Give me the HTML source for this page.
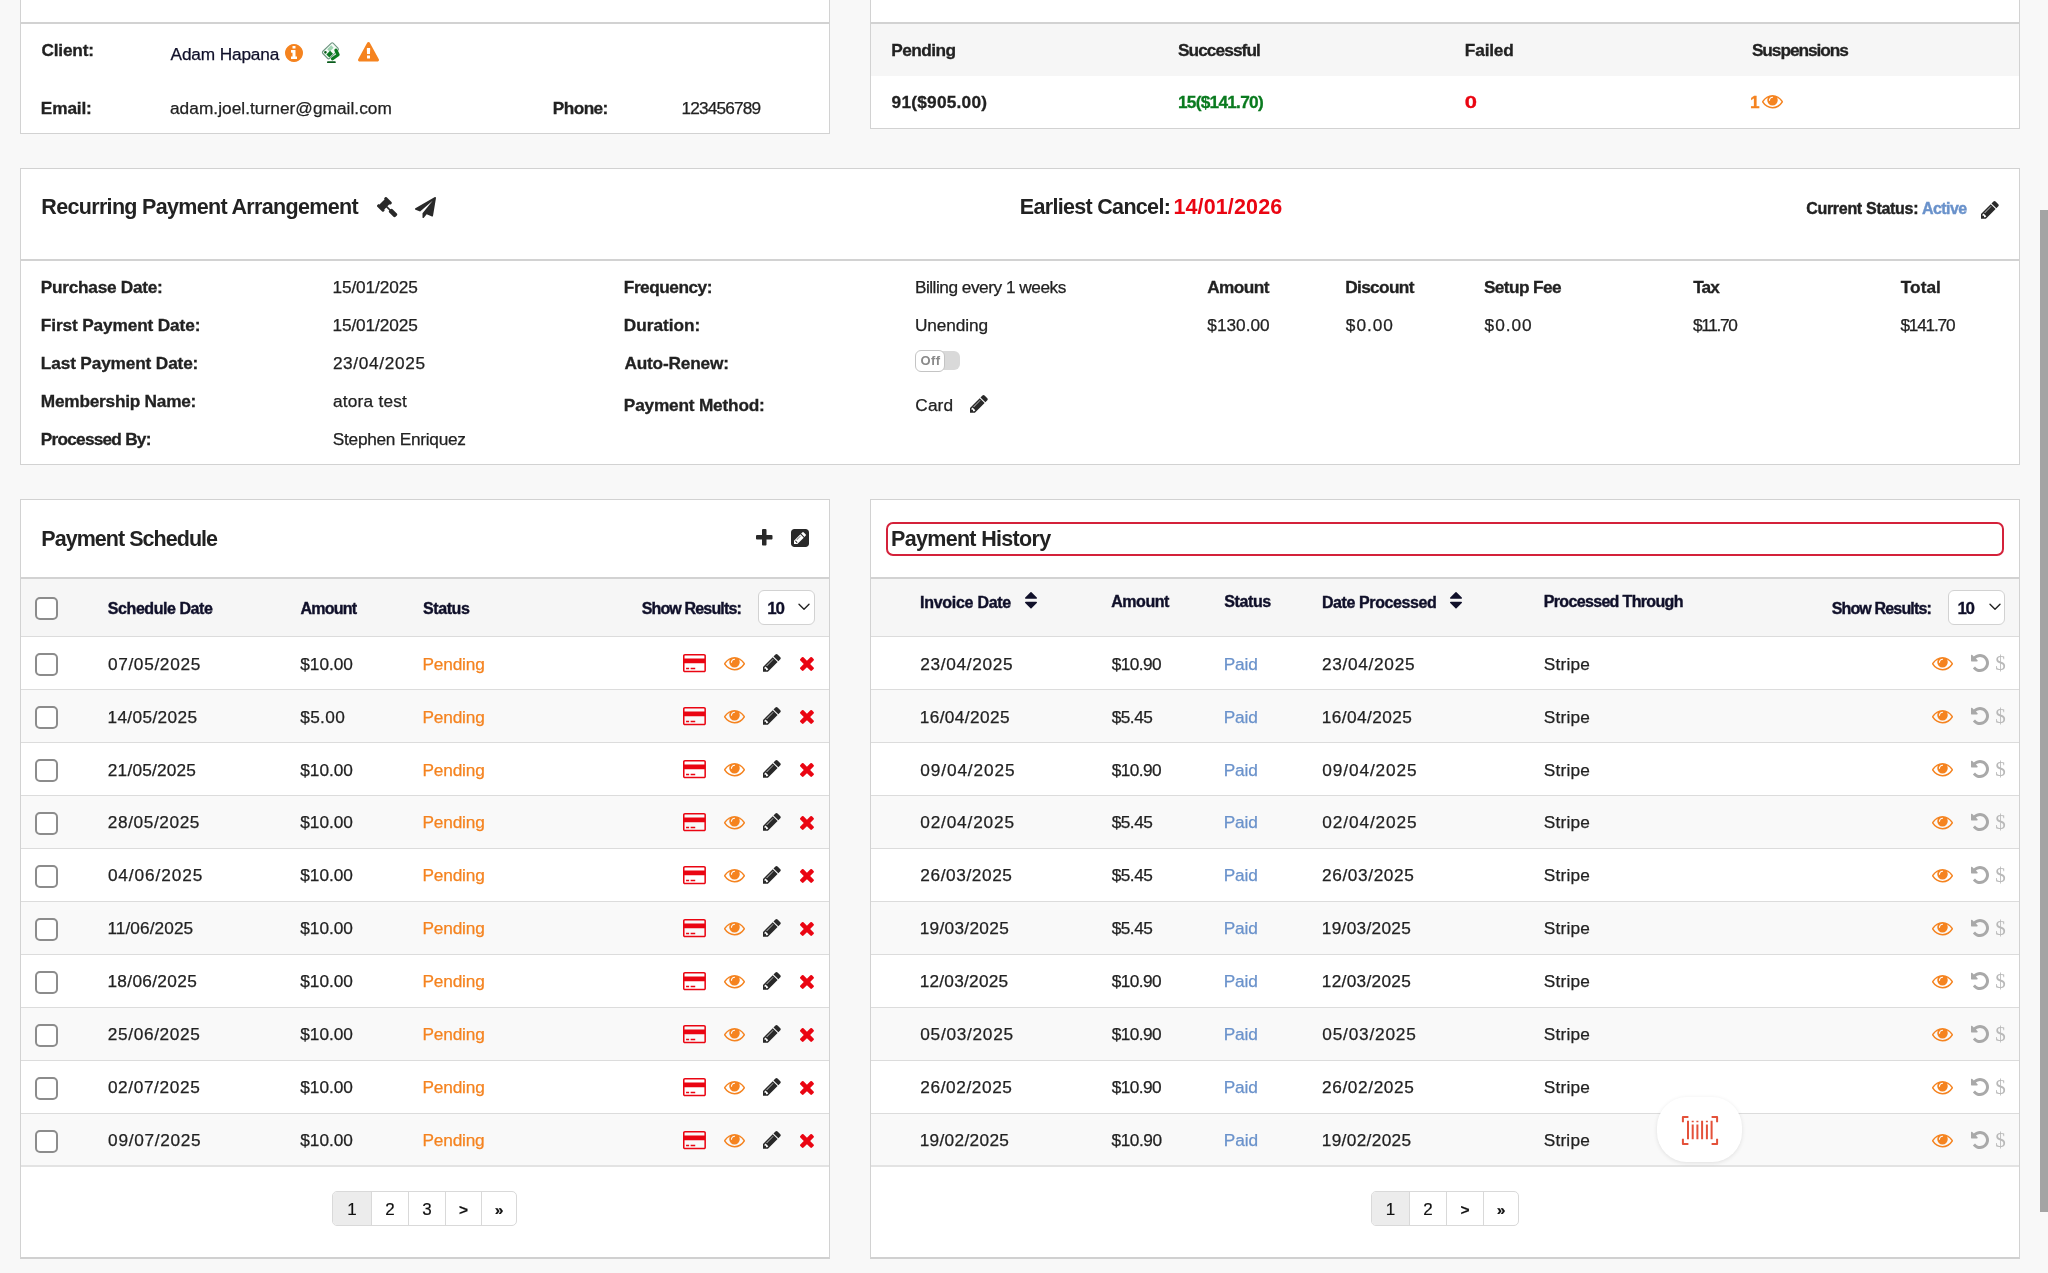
<!DOCTYPE html>
<html lang="en">
<head>
<meta charset="utf-8">
<title>Recurring Payment Arrangement</title>
<style>
*{box-sizing:border-box}
html,body{margin:0;padding:0}
html{background:#f8f8f8}
body{width:2048px;height:1273px;overflow:hidden;background:#f8f8f8;font-family:"Liberation Sans",sans-serif;color:#222;position:relative}
.card{position:absolute;background:#fff;border:1px solid #d2d2d2;will-change:transform}
.card.tbl{border-bottom:2px solid #d0d0d0}
.x{position:absolute;white-space:pre;line-height:1}
.b{font-size:17.25px;font-weight:400;-webkit-text-stroke:.25px}
.l{font-size:17.25px;font-weight:700;-webkit-text-stroke:.3px}
.t{font-size:21.5px;font-weight:700}
.h{font-size:16px;font-weight:700;color:#10102a;-webkit-text-stroke:.4px}
.s{font-size:16px;font-weight:700;-webkit-text-stroke:.4px}
.p{font-size:17px;font-weight:400;color:#111;-webkit-text-stroke:.2px}
.sel{font-size:17px;font-weight:700;color:#10102a;-webkit-text-stroke:.3px}
.off{font-size:13px;font-weight:700;color:#8a8a8a}
.ic{position:absolute;display:block;overflow:visible}
.hr{position:absolute;left:0;right:0;height:2px;background:#d2d2d2}
.thead{position:absolute;left:0;right:0;background:#f6f6f6}
.row{position:absolute;left:0;right:0;height:53px;border-bottom:1px solid #dcdcdc}
.row.alt{background:#f9f9f9}
.row.last{border-bottom:2px solid #e3e3e3}
.cb{position:absolute;width:23px;height:23px;border:2px solid #8c8c8c;border-radius:5px;background:#fff}
.select{position:absolute;height:35px;border:1px solid #d2d2d2;border-radius:6px;background:#fff}
.pager{position:absolute;height:35px;display:flex;border:1px solid #d9d9d9;border-radius:5px;background:#fff;overflow:hidden}
.pager span{display:block;height:100%;border-right:1px solid #d9d9d9;position:relative}
.pager span:last-child{border-right:0}
.pager .on{background:#ececec}
.toggle{position:absolute;width:45px;height:22px}
.toggle u{position:absolute;left:20px;top:1.5px;width:25px;height:19px;border-radius:0 6px 6px 0;background:#d9d9d9}
.toggle i{position:absolute;left:0;top:0;width:30px;height:22px;border-radius:6px;background:#fff;border:1.5px solid #c4c4c4}
.redbox{position:absolute;border:2px solid #d4213a;border-radius:7px}
.fab{position:absolute;background:#fff;border-radius:30px;box-shadow:0 1px 4px rgba(0,0,0,.10)}
.thumb{position:absolute;background:#a4a4a4}
</style>
</head>
<body>
<section class="card" style="left:20px;top:-40px;width:810px;height:174px"><div class="hr" style="top:61px"></div><span class="x l" style="left:20.39px;top:81px;letter-spacing:-0.170px;">Client:</span><span class="x b" style="left:149.58px;top:85px;letter-spacing:-0.154px;color:#10102a;">Adam Hapana</span><svg class="ic" style="left:264.00px;top:82.50px" width="18.00" height="18.00" viewBox="0 -1408 1536 1536" preserveAspectRatio="none" fill="#f5831f"><path transform="scale(1,-1)" d="M1024 160v160q0 14 -9 23t-23 9h-96v512q0 14 -9 23t-23 9h-320q-14 0 -23 -9t-9 -23v-160q0 -14 9 -23t23 -9h96v-320h-96q-14 0 -23 -9t-9 -23v-160q0 -14 9 -23t23 -9h448q14 0 23 9t9 23zM896 1056v160q0 14 -9 23t-23 9h-192q-14 0 -23 -9t-9 -23v-160q0 -14 9 -23 t23 -9h192q14 0 23 9t9 23zM1536 640q0 -209 -103 -385.5t-279.5 -279.5t-385.5 -103t-385.5 103t-279.5 279.5t-103 385.5t103 385.5t279.5 279.5t385.5 103t385.5 -103t279.5 -279.5t103 -385.5z"/></svg><svg class="ic" style="left:293px;top:77px" width="32" height="28" viewBox="0 0 32 28"><g transform="rotate(-44 16.4 12.8)"><rect x="9.1" y="7.9" width="14.6" height="9.8" rx="1.6" fill="#f4fbf6" stroke="#6d9580" stroke-width="1.1"/><rect x="15.2" y="9.4" width="5.6" height="3.4" fill="#9fd3b1"/><rect x="11" y="12.6" width="5.2" height="4.2" fill="#0d7a24"/><circle cx="11.8" cy="10.4" r="1.3" fill="#0b5f1c"/></g><path d="M21.9 12.2l2.2 4.6-5.6 4" fill="none" stroke="#0b7a20" stroke-width="3.2" stroke-linejoin="round" stroke-linecap="round"/><rect x="13" y="23.2" width="8.8" height="1.9" rx=".9" fill="#0a5c1c"/></svg><svg class="ic" style="left:337.09px;top:81.00px" width="21.02" height="19.50" viewBox="-1 -1536 1794 1664" preserveAspectRatio="none" fill="#f5831f"><path transform="scale(1,-1)" d="M1024 161v190q0 14 -9.5 23.5t-22.5 9.5h-192q-13 0 -22.5 -9.5t-9.5 -23.5v-190q0 -14 9.5 -23.5t22.5 -9.5h192q13 0 22.5 9.5t9.5 23.5zM1022 535l18 459q0 12 -10 19q-13 11 -24 11h-220q-11 0 -24 -11q-10 -7 -10 -21l17 -457q0 -10 10 -16.5t24 -6.5h185 q14 0 23.5 6.5t10.5 16.5zM1008 1469l768 -1408q35 -63 -2 -126q-17 -29 -46.5 -46t-63.5 -17h-1536q-34 0 -63.5 17t-46.5 46q-37 63 -2 126l768 1408q17 31 47 49t65 18t65 -18t47 -49z"/></svg><span class="x l" style="left:19.86px;top:139px;letter-spacing:-0.162px;">Email:</span><span class="x b" style="left:148.99px;top:139px;letter-spacing:0.044px;">adam.joel.turner@gmail.com</span><span class="x l" style="left:531.86px;top:139px;letter-spacing:-0.590px;">Phone:</span><span class="x b" style="left:660.42px;top:139px;letter-spacing:-0.838px;">123456789</span></section>
<section class="card" style="left:870px;top:-40px;width:1150px;height:169px"><div class="hr" style="top:61px"></div><div class="thead" style="top:63px;height:52px"></div><span class="x l" style="left:20.19px;top:81px;letter-spacing:-0.549px;">Pending</span><span class="x l" style="left:306.90px;top:81px;letter-spacing:-0.898px;">Successful</span><span class="x l" style="left:593.86px;top:81px;letter-spacing:-0.179px;">Failed</span><span class="x l" style="left:880.90px;top:81px;letter-spacing:-1.036px;">Suspensions</span><span class="x l" style="left:20.62px;top:133px;letter-spacing:0.239px;">91($905.00)</span><span class="x l" style="left:306.91px;top:133px;letter-spacing:-0.730px;color:#0a7a1f;">15($141.70)</span><span class="x l" style="left:593.76px;top:133px;color:#ea0512;transform:scaleX(1.273);transform-origin:0.62px 50%;">0</span><span class="x l" style="left:878.91px;top:133px;color:#f5831f;">1</span><svg class="ic" style="left:890.75px;top:133.65px" width="21.00" height="13.50" viewBox="0 -1152 1792 1152" preserveAspectRatio="none" fill="#f5831f"><path transform="scale(1,-1)" d="M1664 576q-152 236 -381 353q61 -104 61 -225q0 -185 -131.5 -316.5t-316.5 -131.5t-316.5 131.5t-131.5 316.5q0 121 61 225q-229 -117 -381 -353q133 -205 333.5 -326.5t434.5 -121.5t434.5 121.5t333.5 326.5zM944 960q0 20 -14 34t-34 14q-125 0 -214.5 -89.5 t-89.5 -214.5q0 -20 14 -34t34 -14t34 14t14 34q0 86 61 147t147 61q20 0 34 14t14 34zM1792 576q0 -34 -20 -69q-140 -230 -376.5 -368.5t-499.5 -138.5t-499.5 139t-376.5 368q-20 35 -20 69t20 69q140 229 376.5 368t499.5 139t499.5 -139t376.5 -368q20 -35 20 -69z"/></svg></section>
<section class="card" style="left:20px;top:168px;width:2000px;height:297px"><div class="hr" style="top:89.5px"></div><span class="x t" style="left:20.34px;top:28px;letter-spacing:-0.675px;">Recurring Payment Arrangement</span><svg class="ic" style="left:356.36px;top:28.11px" width="20.29" height="20.29" viewBox="40 -1496 1731 1731" preserveAspectRatio="none" fill="#292929"><path transform="scale(1,-1)" d="M1771 0q0 -53 -37 -90l-107 -108q-39 -37 -91 -37q-53 0 -90 37l-363 364q-38 36 -38 90q0 53 43 96l-256 256l-126 -126q-14 -14 -34 -14t-34 14q2 -2 12.5 -12t12.5 -13t10 -11.5t10 -13.5t6 -13.5t5.5 -16.5t1.5 -18q0 -38 -28 -68q-3 -3 -16.5 -18t-19 -20.5 t-18.5 -16.5t-22 -15.5t-22 -9t-26 -4.5q-40 0 -68 28l-408 408q-28 28 -28 68q0 13 4.5 26t9 22t15.5 22t16.5 18.5t20.5 19t18 16.5q30 28 68 28q10 0 18 -1.5t16.5 -5.5t13.5 -6t13.5 -10t11.5 -10t13 -12.5t12 -12.5q-14 14 -14 34t14 34l348 348q14 14 34 14t34 -14 q-2 2 -12.5 12t-12.5 13t-10 11.5t-10 13.5t-6 13.5t-5.5 16.5t-1.5 18q0 38 28 68q3 3 16.5 18t19 20.5t18.5 16.5t22 15.5t22 9t26 4.5q40 0 68 -28l408 -408q28 -28 28 -68q0 -13 -4.5 -26t-9 -22t-15.5 -22t-16.5 -18.5t-20.5 -19t-18 -16.5q-30 -28 -68 -28 q-10 0 -18 1.5t-16.5 5.5t-13.5 6t-13.5 10t-11.5 10t-13 12.5t-12 12.5q14 -14 14 -34t-14 -34l-126 -126l256 -256q43 43 96 43q52 0 91 -37l363 -363q37 -39 37 -91z"/></svg><svg class="ic" style="left:394.00px;top:27.80px" width="21.00" height="21.00" viewBox="-0 -1536 1792 1792" preserveAspectRatio="none" fill="#292929"><path transform="scale(1,-1)" d="M1764 1525q33 -24 27 -64l-256 -1536q-5 -29 -32 -45q-14 -8 -31 -8q-11 0 -24 5l-453 185l-242 -295q-18 -23 -49 -23q-13 0 -22 4q-19 7 -30.5 23.5t-11.5 36.5v349l864 1059l-1069 -925l-395 162q-37 14 -40 55q-2 40 32 59l1664 960q15 9 32 9q20 0 36 -11z"/></svg><span class="x t" style="left:998.77px;top:28px;letter-spacing:-0.684px;">Earliest Cancel:</span><span class="x t" style="left:1152.43px;top:28px;letter-spacing:0.129px;color:#ea0512;">14/01/2026</span><span class="x s" style="left:1785.22px;top:32px;letter-spacing:-0.301px;">Current Status:</span><span class="x s" style="left:1900.88px;top:32px;letter-spacing:-0.526px;color:#6a92cb;">Active</span><svg class="ic" style="left:1959.62px;top:32.12px" width="17.75" height="17.75" viewBox="0 -1387 1515 1515" preserveAspectRatio="none" fill="#292929"><path transform="scale(1,-1)" d="M363 0l91 91l-235 235l-91 -91v-107h128v-128h107zM886 928q0 22 -22 22q-10 0 -17 -7l-542 -542q-7 -7 -7 -17q0 -22 22 -22q10 0 17 7l542 542q7 7 7 17zM832 1120l416 -416l-832 -832h-416v416zM1515 1024q0 -53 -37 -90l-166 -166l-416 416l166 165q36 38 90 38 q53 0 91 -38l235 -234q37 -39 37 -91z"/></svg><span class="x l" style="left:19.86px;top:110px;letter-spacing:-0.281px;">Purchase Date:</span><span class="x b" style="left:311.42px;top:110px;letter-spacing:-0.108px;">15/01/2025</span><span class="x l" style="left:19.86px;top:148px;letter-spacing:-0.138px;">First Payment Date:</span><span class="x b" style="left:311.42px;top:148px;letter-spacing:-0.108px;">15/01/2025</span><span class="x l" style="left:19.86px;top:186px;letter-spacing:-0.152px;">Last Payment Date:</span><span class="x b" style="left:311.89px;top:186px;letter-spacing:0.651px;">23/04/2025</span><span class="x l" style="left:19.86px;top:224px;letter-spacing:-0.241px;">Membership Name:</span><span class="x b" style="left:311.99px;top:224px;letter-spacing:0.219px;">atora test</span><span class="x l" style="left:19.86px;top:262px;letter-spacing:-0.777px;">Processed By:</span><span class="x b" style="left:311.81px;top:262px;letter-spacing:-0.269px;">Stephen Enriquez</span><span class="x l" style="left:602.86px;top:110px;letter-spacing:-0.495px;">Frequency:</span><span class="x l" style="left:602.86px;top:148px;letter-spacing:-0.020px;">Duration:</span><span class="x l" style="left:603.39px;top:186px;letter-spacing:-0.175px;">Auto-Renew:</span><span class="x l" style="left:602.86px;top:228px;letter-spacing:-0.201px;">Payment Method:</span><span class="x b" style="left:893.89px;top:110px;letter-spacing:-0.480px;">Billing every 1 weeks</span><span class="x b" style="left:894.00px;top:148px;letter-spacing:-0.098px;">Unending</span><span class="toggle" style="left:894px;top:180.5px"><u></u><i></i><span class="x off" style="left:5.60px;top:4px;letter-spacing:0.318px;">Off</span></span><span class="x b" style="left:894.36px;top:228px;letter-spacing:0.090px;">Card</span><svg class="ic" style="left:949.37px;top:225.87px" width="17.75" height="17.75" viewBox="0 -1387 1515 1515" preserveAspectRatio="none" fill="#292929"><path transform="scale(1,-1)" d="M363 0l91 91l-235 235l-91 -91v-107h128v-128h107zM886 928q0 22 -22 22q-10 0 -17 -7l-542 -542q-7 -7 -7 -17q0 -22 22 -22q10 0 17 7l542 542q7 7 7 17zM832 1120l416 -416l-832 -832h-416v416zM1515 1024q0 -53 -37 -90l-166 -166l-416 416l166 165q36 38 90 38 q53 0 91 -38l235 -234q37 -39 37 -91z"/></svg><span class="x l" style="left:1186.15px;top:110px;letter-spacing:-0.578px;">Amount</span><span class="x b" style="left:1186.30px;top:148px;letter-spacing:0.008px;">$130.00</span><span class="x l" style="left:1324.19px;top:110px;letter-spacing:-0.638px;">Discount</span><span class="x b" style="left:1324.87px;top:148px;letter-spacing:0.975px;">$0.00</span><span class="x l" style="left:1462.90px;top:110px;letter-spacing:-0.586px;">Setup Fee</span><span class="x b" style="left:1463.62px;top:148px;letter-spacing:0.985px;">$0.00</span><span class="x l" style="left:1672.14px;top:110px;letter-spacing:-0.813px;">Tax</span><span class="x b" style="left:1672.00px;top:148px;letter-spacing:-1.350px;">$11.70</span><span class="x l" style="left:1879.71px;top:110px;letter-spacing:0.070px;">Total</span><span class="x b" style="left:1879.51px;top:148px;letter-spacing:-1.227px;">$141.70</span></section>
<section class="card tbl" style="left:20px;top:499px;width:810px;height:760px"><div class="hr" style="top:76.5px"></div><div class="thead" style="top:78.5px;height:58.5px;border-bottom:1px solid #dcdcdc"></div><span class="x t" style="left:20.34px;top:29px;letter-spacing:-0.963px;">Payment Schedule</span><svg class="ic" style="left:735.35px;top:29.35px" width="16.50" height="16.50" viewBox="0 -1408 1408 1408" preserveAspectRatio="none" fill="#292929"><path transform="scale(1,-1)" d="M1408 800v-192q0 -40 -28 -68t-68 -28h-416v-416q0 -40 -28 -68t-68 -28h-192q-40 0 -68 28t-28 68v416h-416q-40 0 -68 28t-28 68v192q0 40 28 68t68 28h416v416q0 40 28 68t68 28h192q40 0 68 -28t28 -68v-416h416q40 0 68 -28t28 -68z"/></svg><svg class="ic" style="left:769.75px;top:29.40px" width="18.00" height="18.00" viewBox="0 -1408 1536 1536" preserveAspectRatio="none" fill="#292929"><path transform="scale(1,-1)" d="M404 428l152 -152l-52 -52h-56v96h-96v56zM818 818q14 -13 -3 -30l-291 -291q-17 -17 -30 -3q-14 13 3 30l291 291q17 17 30 3zM544 128l544 544l-288 288l-544 -544v-288h288zM1152 736l92 92q28 28 28 68t-28 68l-152 152q-28 28 -68 28t-68 -28l-92 -92zM1536 1120 v-960q0 -119 -84.5 -203.5t-203.5 -84.5h-960q-119 0 -203.5 84.5t-84.5 203.5v960q0 119 84.5 203.5t203.5 84.5h960q119 0 203.5 -84.5t84.5 -203.5z"/></svg><span class="cb" style="left:14px;top:97px"></span><span class="x h" style="left:86.86px;top:101px;letter-spacing:-0.438px;">Schedule Date</span><span class="x h" style="left:279.38px;top:101px;letter-spacing:-0.740px;">Amount</span><span class="x h" style="left:402.08px;top:101px;letter-spacing:-0.425px;">Status</span><span class="x h" style="left:620.63px;top:101px;letter-spacing:-0.834px;">Show Results:</span><span class="select" style="left:737px;top:90px;width:57px"><span class="x sel" style="left:8.32px;top:9px;letter-spacing:-1.350px;">10</span><svg class="ic" style="left:39px;top:12px" width="12" height="8" viewBox="0 0 12 8" fill="none" stroke="#222" stroke-width="1.4" stroke-linecap="round" stroke-linejoin="round"><path d="M1 1.2l5 5 5-5"/></svg></span><div class="row" style="top:137px"><span class="cb" style="left:14px;top:16px"></span><span class="x b" style="left:86.88px;top:19px;letter-spacing:0.671px;">07/05/2025</span><span class="x b" style="left:279.28px;top:19px;letter-spacing:-0.012px;">$10.00</span><span class="x b" style="left:401.54px;top:19px;letter-spacing:-0.185px;color:#f5831f;">Pending</span><svg class="ic" style="left:662.34px;top:16.73px" width="22.93" height="18.34" viewBox="0 -1408 1920 1536" preserveAspectRatio="none" fill="#ea0512"><path transform="scale(1,-1)" d="M1760 1408q66 0 113 -47t47 -113v-1216q0 -66 -47 -113t-113 -47h-1600q-66 0 -113 47t-47 113v1216q0 66 47 113t113 47h1600zM160 1280q-13 0 -22.5 -9.5t-9.5 -22.5v-224h1664v224q0 13 -9.5 22.5t-22.5 9.5h-1600zM1760 0q13 0 22.5 9.5t9.5 22.5v608h-1664v-608 q0 -13 9.5 -22.5t22.5 -9.5h1600zM256 128v128h256v-128h-256zM640 128v128h384v-128h-384z"/></svg><svg class="ic" style="left:703.00px;top:19.65px" width="21.00" height="13.50" viewBox="0 -1152 1792 1152" preserveAspectRatio="none" fill="#f5831f"><path transform="scale(1,-1)" d="M1664 576q-152 236 -381 353q61 -104 61 -225q0 -185 -131.5 -316.5t-316.5 -131.5t-316.5 131.5t-131.5 316.5q0 121 61 225q-229 -117 -381 -353q133 -205 333.5 -326.5t434.5 -121.5t434.5 121.5t333.5 326.5zM944 960q0 20 -14 34t-34 14q-125 0 -214.5 -89.5 t-89.5 -214.5q0 -20 14 -34t34 -14t34 14t14 34q0 86 61 147t147 61q20 0 34 14t14 34zM1792 576q0 -34 -20 -69q-140 -230 -376.5 -368.5t-499.5 -138.5t-499.5 139t-376.5 368q-20 35 -20 69t20 69q140 229 376.5 368t499.5 139t499.5 -139t376.5 -368q20 -35 20 -69z"/></svg><svg class="ic" style="left:742.02px;top:17.22px" width="17.75" height="17.75" viewBox="0 -1387 1515 1515" preserveAspectRatio="none" fill="#292929"><path transform="scale(1,-1)" d="M363 0l91 91l-235 235l-91 -91v-107h128v-128h107zM886 928q0 22 -22 22q-10 0 -17 -7l-542 -542q-7 -7 -7 -17q0 -22 22 -22q10 0 17 7l542 542q7 7 7 17zM832 1120l416 -416l-832 -832h-416v416zM1515 1024q0 -53 -37 -90l-166 -166l-416 416l166 165q36 38 90 38 q53 0 91 -38l235 -234q37 -39 37 -91z"/></svg><svg class="ic" style="left:779.04px;top:20.04px" width="13.92" height="13.92" viewBox="110 -1170 1188 1188" preserveAspectRatio="none" fill="#ea0512"><path transform="scale(1,-1)" d="M1298 214q0 -40 -28 -68l-136 -136q-28 -28 -68 -28t-68 28l-294 294l-294 -294q-28 -28 -68 -28t-68 28l-136 136q-28 28 -28 68t28 68l294 294l-294 294q-28 28 -28 68t28 68l136 136q28 28 68 28t68 -28l294 -294l294 294q28 28 68 28t68 -28l136 -136q28 -28 28 -68 t-28 -68l-294 -294l294 -294q28 -28 28 -68z"/></svg></div><div class="row alt" style="top:190px"><span class="cb" style="left:14px;top:16px"></span><span class="x b" style="left:86.45px;top:19px;letter-spacing:0.357px;">14/05/2025</span><span class="x b" style="left:279.28px;top:19px;letter-spacing:0.323px;">$5.00</span><span class="x b" style="left:401.54px;top:19px;letter-spacing:-0.185px;color:#f5831f;">Pending</span><svg class="ic" style="left:662.34px;top:16.73px" width="22.93" height="18.34" viewBox="0 -1408 1920 1536" preserveAspectRatio="none" fill="#ea0512"><path transform="scale(1,-1)" d="M1760 1408q66 0 113 -47t47 -113v-1216q0 -66 -47 -113t-113 -47h-1600q-66 0 -113 47t-47 113v1216q0 66 47 113t113 47h1600zM160 1280q-13 0 -22.5 -9.5t-9.5 -22.5v-224h1664v224q0 13 -9.5 22.5t-22.5 9.5h-1600zM1760 0q13 0 22.5 9.5t9.5 22.5v608h-1664v-608 q0 -13 9.5 -22.5t22.5 -9.5h1600zM256 128v128h256v-128h-256zM640 128v128h384v-128h-384z"/></svg><svg class="ic" style="left:703.00px;top:19.65px" width="21.00" height="13.50" viewBox="0 -1152 1792 1152" preserveAspectRatio="none" fill="#f5831f"><path transform="scale(1,-1)" d="M1664 576q-152 236 -381 353q61 -104 61 -225q0 -185 -131.5 -316.5t-316.5 -131.5t-316.5 131.5t-131.5 316.5q0 121 61 225q-229 -117 -381 -353q133 -205 333.5 -326.5t434.5 -121.5t434.5 121.5t333.5 326.5zM944 960q0 20 -14 34t-34 14q-125 0 -214.5 -89.5 t-89.5 -214.5q0 -20 14 -34t34 -14t34 14t14 34q0 86 61 147t147 61q20 0 34 14t14 34zM1792 576q0 -34 -20 -69q-140 -230 -376.5 -368.5t-499.5 -138.5t-499.5 139t-376.5 368q-20 35 -20 69t20 69q140 229 376.5 368t499.5 139t499.5 -139t376.5 -368q20 -35 20 -69z"/></svg><svg class="ic" style="left:742.02px;top:17.22px" width="17.75" height="17.75" viewBox="0 -1387 1515 1515" preserveAspectRatio="none" fill="#292929"><path transform="scale(1,-1)" d="M363 0l91 91l-235 235l-91 -91v-107h128v-128h107zM886 928q0 22 -22 22q-10 0 -17 -7l-542 -542q-7 -7 -7 -17q0 -22 22 -22q10 0 17 7l542 542q7 7 7 17zM832 1120l416 -416l-832 -832h-416v416zM1515 1024q0 -53 -37 -90l-166 -166l-416 416l166 165q36 38 90 38 q53 0 91 -38l235 -234q37 -39 37 -91z"/></svg><svg class="ic" style="left:779.04px;top:20.04px" width="13.92" height="13.92" viewBox="110 -1170 1188 1188" preserveAspectRatio="none" fill="#ea0512"><path transform="scale(1,-1)" d="M1298 214q0 -40 -28 -68l-136 -136q-28 -28 -68 -28t-68 28l-294 294l-294 -294q-28 -28 -68 -28t-68 28l-136 136q-28 28 -28 68t28 68l294 294l-294 294q-28 28 -28 68t28 68l136 136q28 28 68 28t68 -28l294 -294l294 294q28 28 68 28t68 -28l136 -136q28 -28 28 -68 t-28 -68l-294 -294l294 -294q28 -28 28 -68z"/></svg></div><div class="row" style="top:243px"><span class="cb" style="left:14px;top:16px"></span><span class="x b" style="left:86.82px;top:19px;letter-spacing:0.200px;">21/05/2025</span><span class="x b" style="left:279.28px;top:19px;letter-spacing:-0.012px;">$10.00</span><span class="x b" style="left:401.54px;top:19px;letter-spacing:-0.185px;color:#f5831f;">Pending</span><svg class="ic" style="left:662.34px;top:16.73px" width="22.93" height="18.34" viewBox="0 -1408 1920 1536" preserveAspectRatio="none" fill="#ea0512"><path transform="scale(1,-1)" d="M1760 1408q66 0 113 -47t47 -113v-1216q0 -66 -47 -113t-113 -47h-1600q-66 0 -113 47t-47 113v1216q0 66 47 113t113 47h1600zM160 1280q-13 0 -22.5 -9.5t-9.5 -22.5v-224h1664v224q0 13 -9.5 22.5t-22.5 9.5h-1600zM1760 0q13 0 22.5 9.5t9.5 22.5v608h-1664v-608 q0 -13 9.5 -22.5t22.5 -9.5h1600zM256 128v128h256v-128h-256zM640 128v128h384v-128h-384z"/></svg><svg class="ic" style="left:703.00px;top:19.65px" width="21.00" height="13.50" viewBox="0 -1152 1792 1152" preserveAspectRatio="none" fill="#f5831f"><path transform="scale(1,-1)" d="M1664 576q-152 236 -381 353q61 -104 61 -225q0 -185 -131.5 -316.5t-316.5 -131.5t-316.5 131.5t-131.5 316.5q0 121 61 225q-229 -117 -381 -353q133 -205 333.5 -326.5t434.5 -121.5t434.5 121.5t333.5 326.5zM944 960q0 20 -14 34t-34 14q-125 0 -214.5 -89.5 t-89.5 -214.5q0 -20 14 -34t34 -14t34 14t14 34q0 86 61 147t147 61q20 0 34 14t14 34zM1792 576q0 -34 -20 -69q-140 -230 -376.5 -368.5t-499.5 -138.5t-499.5 139t-376.5 368q-20 35 -20 69t20 69q140 229 376.5 368t499.5 139t499.5 -139t376.5 -368q20 -35 20 -69z"/></svg><svg class="ic" style="left:742.02px;top:17.22px" width="17.75" height="17.75" viewBox="0 -1387 1515 1515" preserveAspectRatio="none" fill="#292929"><path transform="scale(1,-1)" d="M363 0l91 91l-235 235l-91 -91v-107h128v-128h107zM886 928q0 22 -22 22q-10 0 -17 -7l-542 -542q-7 -7 -7 -17q0 -22 22 -22q10 0 17 7l542 542q7 7 7 17zM832 1120l416 -416l-832 -832h-416v416zM1515 1024q0 -53 -37 -90l-166 -166l-416 416l166 165q36 38 90 38 q53 0 91 -38l235 -234q37 -39 37 -91z"/></svg><svg class="ic" style="left:779.04px;top:20.04px" width="13.92" height="13.92" viewBox="110 -1170 1188 1188" preserveAspectRatio="none" fill="#ea0512"><path transform="scale(1,-1)" d="M1298 214q0 -40 -28 -68l-136 -136q-28 -28 -68 -28t-68 28l-294 294l-294 -294q-28 -28 -68 -28t-68 28l-136 136q-28 28 -28 68t28 68l294 294l-294 294q-28 28 -28 68t28 68l136 136q28 28 68 28t68 -28l294 -294l294 294q28 28 68 28t68 -28l136 -136q28 -28 28 -68 t-28 -68l-294 -294l294 -294q28 -28 28 -68z"/></svg></div><div class="row alt" style="top:296px"><span class="cb" style="left:14px;top:16px"></span><span class="x b" style="left:86.82px;top:18px;letter-spacing:0.590px;">28/05/2025</span><span class="x b" style="left:279.28px;top:18px;letter-spacing:-0.012px;">$10.00</span><span class="x b" style="left:401.54px;top:18px;letter-spacing:-0.185px;color:#f5831f;">Pending</span><svg class="ic" style="left:662.34px;top:16.73px" width="22.93" height="18.34" viewBox="0 -1408 1920 1536" preserveAspectRatio="none" fill="#ea0512"><path transform="scale(1,-1)" d="M1760 1408q66 0 113 -47t47 -113v-1216q0 -66 -47 -113t-113 -47h-1600q-66 0 -113 47t-47 113v1216q0 66 47 113t113 47h1600zM160 1280q-13 0 -22.5 -9.5t-9.5 -22.5v-224h1664v224q0 13 -9.5 22.5t-22.5 9.5h-1600zM1760 0q13 0 22.5 9.5t9.5 22.5v608h-1664v-608 q0 -13 9.5 -22.5t22.5 -9.5h1600zM256 128v128h256v-128h-256zM640 128v128h384v-128h-384z"/></svg><svg class="ic" style="left:703.00px;top:19.65px" width="21.00" height="13.50" viewBox="0 -1152 1792 1152" preserveAspectRatio="none" fill="#f5831f"><path transform="scale(1,-1)" d="M1664 576q-152 236 -381 353q61 -104 61 -225q0 -185 -131.5 -316.5t-316.5 -131.5t-316.5 131.5t-131.5 316.5q0 121 61 225q-229 -117 -381 -353q133 -205 333.5 -326.5t434.5 -121.5t434.5 121.5t333.5 326.5zM944 960q0 20 -14 34t-34 14q-125 0 -214.5 -89.5 t-89.5 -214.5q0 -20 14 -34t34 -14t34 14t14 34q0 86 61 147t147 61q20 0 34 14t14 34zM1792 576q0 -34 -20 -69q-140 -230 -376.5 -368.5t-499.5 -138.5t-499.5 139t-376.5 368q-20 35 -20 69t20 69q140 229 376.5 368t499.5 139t499.5 -139t376.5 -368q20 -35 20 -69z"/></svg><svg class="ic" style="left:742.02px;top:17.22px" width="17.75" height="17.75" viewBox="0 -1387 1515 1515" preserveAspectRatio="none" fill="#292929"><path transform="scale(1,-1)" d="M363 0l91 91l-235 235l-91 -91v-107h128v-128h107zM886 928q0 22 -22 22q-10 0 -17 -7l-542 -542q-7 -7 -7 -17q0 -22 22 -22q10 0 17 7l542 542q7 7 7 17zM832 1120l416 -416l-832 -832h-416v416zM1515 1024q0 -53 -37 -90l-166 -166l-416 416l166 165q36 38 90 38 q53 0 91 -38l235 -234q37 -39 37 -91z"/></svg><svg class="ic" style="left:779.04px;top:20.04px" width="13.92" height="13.92" viewBox="110 -1170 1188 1188" preserveAspectRatio="none" fill="#ea0512"><path transform="scale(1,-1)" d="M1298 214q0 -40 -28 -68l-136 -136q-28 -28 -68 -28t-68 28l-294 294l-294 -294q-28 -28 -68 -28t-68 28l-136 136q-28 28 -28 68t28 68l294 294l-294 294q-28 28 -28 68t28 68l136 136q28 28 68 28t68 -28l294 -294l294 294q28 28 68 28t68 -28l136 -136q28 -28 28 -68 t-28 -68l-294 -294l294 -294q28 -28 28 -68z"/></svg></div><div class="row" style="top:349px"><span class="cb" style="left:14px;top:16px"></span><span class="x b" style="left:86.88px;top:18px;letter-spacing:0.895px;">04/06/2025</span><span class="x b" style="left:279.28px;top:18px;letter-spacing:-0.012px;">$10.00</span><span class="x b" style="left:401.54px;top:18px;letter-spacing:-0.185px;color:#f5831f;">Pending</span><svg class="ic" style="left:662.34px;top:16.73px" width="22.93" height="18.34" viewBox="0 -1408 1920 1536" preserveAspectRatio="none" fill="#ea0512"><path transform="scale(1,-1)" d="M1760 1408q66 0 113 -47t47 -113v-1216q0 -66 -47 -113t-113 -47h-1600q-66 0 -113 47t-47 113v1216q0 66 47 113t113 47h1600zM160 1280q-13 0 -22.5 -9.5t-9.5 -22.5v-224h1664v224q0 13 -9.5 22.5t-22.5 9.5h-1600zM1760 0q13 0 22.5 9.5t9.5 22.5v608h-1664v-608 q0 -13 9.5 -22.5t22.5 -9.5h1600zM256 128v128h256v-128h-256zM640 128v128h384v-128h-384z"/></svg><svg class="ic" style="left:703.00px;top:19.65px" width="21.00" height="13.50" viewBox="0 -1152 1792 1152" preserveAspectRatio="none" fill="#f5831f"><path transform="scale(1,-1)" d="M1664 576q-152 236 -381 353q61 -104 61 -225q0 -185 -131.5 -316.5t-316.5 -131.5t-316.5 131.5t-131.5 316.5q0 121 61 225q-229 -117 -381 -353q133 -205 333.5 -326.5t434.5 -121.5t434.5 121.5t333.5 326.5zM944 960q0 20 -14 34t-34 14q-125 0 -214.5 -89.5 t-89.5 -214.5q0 -20 14 -34t34 -14t34 14t14 34q0 86 61 147t147 61q20 0 34 14t14 34zM1792 576q0 -34 -20 -69q-140 -230 -376.5 -368.5t-499.5 -138.5t-499.5 139t-376.5 368q-20 35 -20 69t20 69q140 229 376.5 368t499.5 139t499.5 -139t376.5 -368q20 -35 20 -69z"/></svg><svg class="ic" style="left:742.02px;top:17.22px" width="17.75" height="17.75" viewBox="0 -1387 1515 1515" preserveAspectRatio="none" fill="#292929"><path transform="scale(1,-1)" d="M363 0l91 91l-235 235l-91 -91v-107h128v-128h107zM886 928q0 22 -22 22q-10 0 -17 -7l-542 -542q-7 -7 -7 -17q0 -22 22 -22q10 0 17 7l542 542q7 7 7 17zM832 1120l416 -416l-832 -832h-416v416zM1515 1024q0 -53 -37 -90l-166 -166l-416 416l166 165q36 38 90 38 q53 0 91 -38l235 -234q37 -39 37 -91z"/></svg><svg class="ic" style="left:779.04px;top:20.04px" width="13.92" height="13.92" viewBox="110 -1170 1188 1188" preserveAspectRatio="none" fill="#ea0512"><path transform="scale(1,-1)" d="M1298 214q0 -40 -28 -68l-136 -136q-28 -28 -68 -28t-68 28l-294 294l-294 -294q-28 -28 -68 -28t-68 28l-136 136q-28 28 -28 68t28 68l294 294l-294 294q-28 28 -28 68t28 68l136 136q28 28 68 28t68 -28l294 -294l294 294q28 28 68 28t68 -28l136 -136q28 -28 28 -68 t-28 -68l-294 -294l294 -294q28 -28 28 -68z"/></svg></div><div class="row alt" style="top:402px"><span class="cb" style="left:14px;top:16px"></span><span class="x b" style="left:86.45px;top:18px;letter-spacing:0.076px;">11/06/2025</span><span class="x b" style="left:279.28px;top:18px;letter-spacing:-0.012px;">$10.00</span><span class="x b" style="left:401.54px;top:18px;letter-spacing:-0.185px;color:#f5831f;">Pending</span><svg class="ic" style="left:662.34px;top:16.73px" width="22.93" height="18.34" viewBox="0 -1408 1920 1536" preserveAspectRatio="none" fill="#ea0512"><path transform="scale(1,-1)" d="M1760 1408q66 0 113 -47t47 -113v-1216q0 -66 -47 -113t-113 -47h-1600q-66 0 -113 47t-47 113v1216q0 66 47 113t113 47h1600zM160 1280q-13 0 -22.5 -9.5t-9.5 -22.5v-224h1664v224q0 13 -9.5 22.5t-22.5 9.5h-1600zM1760 0q13 0 22.5 9.5t9.5 22.5v608h-1664v-608 q0 -13 9.5 -22.5t22.5 -9.5h1600zM256 128v128h256v-128h-256zM640 128v128h384v-128h-384z"/></svg><svg class="ic" style="left:703.00px;top:19.65px" width="21.00" height="13.50" viewBox="0 -1152 1792 1152" preserveAspectRatio="none" fill="#f5831f"><path transform="scale(1,-1)" d="M1664 576q-152 236 -381 353q61 -104 61 -225q0 -185 -131.5 -316.5t-316.5 -131.5t-316.5 131.5t-131.5 316.5q0 121 61 225q-229 -117 -381 -353q133 -205 333.5 -326.5t434.5 -121.5t434.5 121.5t333.5 326.5zM944 960q0 20 -14 34t-34 14q-125 0 -214.5 -89.5 t-89.5 -214.5q0 -20 14 -34t34 -14t34 14t14 34q0 86 61 147t147 61q20 0 34 14t14 34zM1792 576q0 -34 -20 -69q-140 -230 -376.5 -368.5t-499.5 -138.5t-499.5 139t-376.5 368q-20 35 -20 69t20 69q140 229 376.5 368t499.5 139t499.5 -139t376.5 -368q20 -35 20 -69z"/></svg><svg class="ic" style="left:742.02px;top:17.22px" width="17.75" height="17.75" viewBox="0 -1387 1515 1515" preserveAspectRatio="none" fill="#292929"><path transform="scale(1,-1)" d="M363 0l91 91l-235 235l-91 -91v-107h128v-128h107zM886 928q0 22 -22 22q-10 0 -17 -7l-542 -542q-7 -7 -7 -17q0 -22 22 -22q10 0 17 7l542 542q7 7 7 17zM832 1120l416 -416l-832 -832h-416v416zM1515 1024q0 -53 -37 -90l-166 -166l-416 416l166 165q36 38 90 38 q53 0 91 -38l235 -234q37 -39 37 -91z"/></svg><svg class="ic" style="left:779.04px;top:20.04px" width="13.92" height="13.92" viewBox="110 -1170 1188 1188" preserveAspectRatio="none" fill="#ea0512"><path transform="scale(1,-1)" d="M1298 214q0 -40 -28 -68l-136 -136q-28 -28 -68 -28t-68 28l-294 294l-294 -294q-28 -28 -68 -28t-68 28l-136 136q-28 28 -28 68t28 68l294 294l-294 294q-28 28 -28 68t28 68l136 136q28 28 68 28t68 -28l294 -294l294 294q28 28 68 28t68 -28l136 -136q28 -28 28 -68 t-28 -68l-294 -294l294 -294q28 -28 28 -68z"/></svg></div><div class="row" style="top:455px"><span class="cb" style="left:14px;top:16px"></span><span class="x b" style="left:86.45px;top:18px;letter-spacing:0.329px;">18/06/2025</span><span class="x b" style="left:279.28px;top:18px;letter-spacing:-0.012px;">$10.00</span><span class="x b" style="left:401.54px;top:18px;letter-spacing:-0.185px;color:#f5831f;">Pending</span><svg class="ic" style="left:662.34px;top:16.73px" width="22.93" height="18.34" viewBox="0 -1408 1920 1536" preserveAspectRatio="none" fill="#ea0512"><path transform="scale(1,-1)" d="M1760 1408q66 0 113 -47t47 -113v-1216q0 -66 -47 -113t-113 -47h-1600q-66 0 -113 47t-47 113v1216q0 66 47 113t113 47h1600zM160 1280q-13 0 -22.5 -9.5t-9.5 -22.5v-224h1664v224q0 13 -9.5 22.5t-22.5 9.5h-1600zM1760 0q13 0 22.5 9.5t9.5 22.5v608h-1664v-608 q0 -13 9.5 -22.5t22.5 -9.5h1600zM256 128v128h256v-128h-256zM640 128v128h384v-128h-384z"/></svg><svg class="ic" style="left:703.00px;top:19.65px" width="21.00" height="13.50" viewBox="0 -1152 1792 1152" preserveAspectRatio="none" fill="#f5831f"><path transform="scale(1,-1)" d="M1664 576q-152 236 -381 353q61 -104 61 -225q0 -185 -131.5 -316.5t-316.5 -131.5t-316.5 131.5t-131.5 316.5q0 121 61 225q-229 -117 -381 -353q133 -205 333.5 -326.5t434.5 -121.5t434.5 121.5t333.5 326.5zM944 960q0 20 -14 34t-34 14q-125 0 -214.5 -89.5 t-89.5 -214.5q0 -20 14 -34t34 -14t34 14t14 34q0 86 61 147t147 61q20 0 34 14t14 34zM1792 576q0 -34 -20 -69q-140 -230 -376.5 -368.5t-499.5 -138.5t-499.5 139t-376.5 368q-20 35 -20 69t20 69q140 229 376.5 368t499.5 139t499.5 -139t376.5 -368q20 -35 20 -69z"/></svg><svg class="ic" style="left:742.02px;top:17.22px" width="17.75" height="17.75" viewBox="0 -1387 1515 1515" preserveAspectRatio="none" fill="#292929"><path transform="scale(1,-1)" d="M363 0l91 91l-235 235l-91 -91v-107h128v-128h107zM886 928q0 22 -22 22q-10 0 -17 -7l-542 -542q-7 -7 -7 -17q0 -22 22 -22q10 0 17 7l542 542q7 7 7 17zM832 1120l416 -416l-832 -832h-416v416zM1515 1024q0 -53 -37 -90l-166 -166l-416 416l166 165q36 38 90 38 q53 0 91 -38l235 -234q37 -39 37 -91z"/></svg><svg class="ic" style="left:779.04px;top:20.04px" width="13.92" height="13.92" viewBox="110 -1170 1188 1188" preserveAspectRatio="none" fill="#ea0512"><path transform="scale(1,-1)" d="M1298 214q0 -40 -28 -68l-136 -136q-28 -28 -68 -28t-68 28l-294 294l-294 -294q-28 -28 -68 -28t-68 28l-136 136q-28 28 -28 68t28 68l294 294l-294 294q-28 28 -28 68t28 68l136 136q28 28 68 28t68 -28l294 -294l294 294q28 28 68 28t68 -28l136 -136q28 -28 28 -68 t-28 -68l-294 -294l294 -294q28 -28 28 -68z"/></svg></div><div class="row alt" style="top:508px"><span class="cb" style="left:14px;top:16px"></span><span class="x b" style="left:86.82px;top:18px;letter-spacing:0.630px;">25/06/2025</span><span class="x b" style="left:279.28px;top:18px;letter-spacing:-0.012px;">$10.00</span><span class="x b" style="left:401.54px;top:18px;letter-spacing:-0.185px;color:#f5831f;">Pending</span><svg class="ic" style="left:662.34px;top:16.73px" width="22.93" height="18.34" viewBox="0 -1408 1920 1536" preserveAspectRatio="none" fill="#ea0512"><path transform="scale(1,-1)" d="M1760 1408q66 0 113 -47t47 -113v-1216q0 -66 -47 -113t-113 -47h-1600q-66 0 -113 47t-47 113v1216q0 66 47 113t113 47h1600zM160 1280q-13 0 -22.5 -9.5t-9.5 -22.5v-224h1664v224q0 13 -9.5 22.5t-22.5 9.5h-1600zM1760 0q13 0 22.5 9.5t9.5 22.5v608h-1664v-608 q0 -13 9.5 -22.5t22.5 -9.5h1600zM256 128v128h256v-128h-256zM640 128v128h384v-128h-384z"/></svg><svg class="ic" style="left:703.00px;top:19.65px" width="21.00" height="13.50" viewBox="0 -1152 1792 1152" preserveAspectRatio="none" fill="#f5831f"><path transform="scale(1,-1)" d="M1664 576q-152 236 -381 353q61 -104 61 -225q0 -185 -131.5 -316.5t-316.5 -131.5t-316.5 131.5t-131.5 316.5q0 121 61 225q-229 -117 -381 -353q133 -205 333.5 -326.5t434.5 -121.5t434.5 121.5t333.5 326.5zM944 960q0 20 -14 34t-34 14q-125 0 -214.5 -89.5 t-89.5 -214.5q0 -20 14 -34t34 -14t34 14t14 34q0 86 61 147t147 61q20 0 34 14t14 34zM1792 576q0 -34 -20 -69q-140 -230 -376.5 -368.5t-499.5 -138.5t-499.5 139t-376.5 368q-20 35 -20 69t20 69q140 229 376.5 368t499.5 139t499.5 -139t376.5 -368q20 -35 20 -69z"/></svg><svg class="ic" style="left:742.02px;top:17.22px" width="17.75" height="17.75" viewBox="0 -1387 1515 1515" preserveAspectRatio="none" fill="#292929"><path transform="scale(1,-1)" d="M363 0l91 91l-235 235l-91 -91v-107h128v-128h107zM886 928q0 22 -22 22q-10 0 -17 -7l-542 -542q-7 -7 -7 -17q0 -22 22 -22q10 0 17 7l542 542q7 7 7 17zM832 1120l416 -416l-832 -832h-416v416zM1515 1024q0 -53 -37 -90l-166 -166l-416 416l166 165q36 38 90 38 q53 0 91 -38l235 -234q37 -39 37 -91z"/></svg><svg class="ic" style="left:779.04px;top:20.04px" width="13.92" height="13.92" viewBox="110 -1170 1188 1188" preserveAspectRatio="none" fill="#ea0512"><path transform="scale(1,-1)" d="M1298 214q0 -40 -28 -68l-136 -136q-28 -28 -68 -28t-68 28l-294 294l-294 -294q-28 -28 -68 -28t-68 28l-136 136q-28 28 -28 68t28 68l294 294l-294 294q-28 28 -28 68t28 68l136 136q28 28 68 28t68 -28l294 -294l294 294q28 28 68 28t68 -28l136 -136q28 -28 28 -68 t-28 -68l-294 -294l294 -294q28 -28 28 -68z"/></svg></div><div class="row" style="top:561px"><span class="cb" style="left:14px;top:16px"></span><span class="x b" style="left:86.88px;top:18px;letter-spacing:0.616px;">02/07/2025</span><span class="x b" style="left:279.28px;top:18px;letter-spacing:-0.012px;">$10.00</span><span class="x b" style="left:401.54px;top:18px;letter-spacing:-0.185px;color:#f5831f;">Pending</span><svg class="ic" style="left:662.34px;top:16.73px" width="22.93" height="18.34" viewBox="0 -1408 1920 1536" preserveAspectRatio="none" fill="#ea0512"><path transform="scale(1,-1)" d="M1760 1408q66 0 113 -47t47 -113v-1216q0 -66 -47 -113t-113 -47h-1600q-66 0 -113 47t-47 113v1216q0 66 47 113t113 47h1600zM160 1280q-13 0 -22.5 -9.5t-9.5 -22.5v-224h1664v224q0 13 -9.5 22.5t-22.5 9.5h-1600zM1760 0q13 0 22.5 9.5t9.5 22.5v608h-1664v-608 q0 -13 9.5 -22.5t22.5 -9.5h1600zM256 128v128h256v-128h-256zM640 128v128h384v-128h-384z"/></svg><svg class="ic" style="left:703.00px;top:19.65px" width="21.00" height="13.50" viewBox="0 -1152 1792 1152" preserveAspectRatio="none" fill="#f5831f"><path transform="scale(1,-1)" d="M1664 576q-152 236 -381 353q61 -104 61 -225q0 -185 -131.5 -316.5t-316.5 -131.5t-316.5 131.5t-131.5 316.5q0 121 61 225q-229 -117 -381 -353q133 -205 333.5 -326.5t434.5 -121.5t434.5 121.5t333.5 326.5zM944 960q0 20 -14 34t-34 14q-125 0 -214.5 -89.5 t-89.5 -214.5q0 -20 14 -34t34 -14t34 14t14 34q0 86 61 147t147 61q20 0 34 14t14 34zM1792 576q0 -34 -20 -69q-140 -230 -376.5 -368.5t-499.5 -138.5t-499.5 139t-376.5 368q-20 35 -20 69t20 69q140 229 376.5 368t499.5 139t499.5 -139t376.5 -368q20 -35 20 -69z"/></svg><svg class="ic" style="left:742.02px;top:17.22px" width="17.75" height="17.75" viewBox="0 -1387 1515 1515" preserveAspectRatio="none" fill="#292929"><path transform="scale(1,-1)" d="M363 0l91 91l-235 235l-91 -91v-107h128v-128h107zM886 928q0 22 -22 22q-10 0 -17 -7l-542 -542q-7 -7 -7 -17q0 -22 22 -22q10 0 17 7l542 542q7 7 7 17zM832 1120l416 -416l-832 -832h-416v416zM1515 1024q0 -53 -37 -90l-166 -166l-416 416l166 165q36 38 90 38 q53 0 91 -38l235 -234q37 -39 37 -91z"/></svg><svg class="ic" style="left:779.04px;top:20.04px" width="13.92" height="13.92" viewBox="110 -1170 1188 1188" preserveAspectRatio="none" fill="#ea0512"><path transform="scale(1,-1)" d="M1298 214q0 -40 -28 -68l-136 -136q-28 -28 -68 -28t-68 28l-294 294l-294 -294q-28 -28 -68 -28t-68 28l-136 136q-28 28 -28 68t28 68l294 294l-294 294q-28 28 -28 68t28 68l136 136q28 28 68 28t68 -28l294 -294l294 294q28 28 68 28t68 -28l136 -136q28 -28 28 -68 t-28 -68l-294 -294l294 -294q28 -28 28 -68z"/></svg></div><div class="row alt last" style="top:614px"><span class="cb" style="left:14px;top:16px"></span><span class="x b" style="left:87.11px;top:18px;letter-spacing:0.693px;">09/07/2025</span><span class="x b" style="left:279.30px;top:18px;letter-spacing:-0.054px;">$10.00</span><span class="x b" style="left:401.54px;top:18px;letter-spacing:-0.187px;color:#f5831f;">Pending</span><svg class="ic" style="left:662.34px;top:16.73px" width="22.93" height="18.34" viewBox="0 -1408 1920 1536" preserveAspectRatio="none" fill="#ea0512"><path transform="scale(1,-1)" d="M1760 1408q66 0 113 -47t47 -113v-1216q0 -66 -47 -113t-113 -47h-1600q-66 0 -113 47t-47 113v1216q0 66 47 113t113 47h1600zM160 1280q-13 0 -22.5 -9.5t-9.5 -22.5v-224h1664v224q0 13 -9.5 22.5t-22.5 9.5h-1600zM1760 0q13 0 22.5 9.5t9.5 22.5v608h-1664v-608 q0 -13 9.5 -22.5t22.5 -9.5h1600zM256 128v128h256v-128h-256zM640 128v128h384v-128h-384z"/></svg><svg class="ic" style="left:703.00px;top:19.65px" width="21.00" height="13.50" viewBox="0 -1152 1792 1152" preserveAspectRatio="none" fill="#f5831f"><path transform="scale(1,-1)" d="M1664 576q-152 236 -381 353q61 -104 61 -225q0 -185 -131.5 -316.5t-316.5 -131.5t-316.5 131.5t-131.5 316.5q0 121 61 225q-229 -117 -381 -353q133 -205 333.5 -326.5t434.5 -121.5t434.5 121.5t333.5 326.5zM944 960q0 20 -14 34t-34 14q-125 0 -214.5 -89.5 t-89.5 -214.5q0 -20 14 -34t34 -14t34 14t14 34q0 86 61 147t147 61q20 0 34 14t14 34zM1792 576q0 -34 -20 -69q-140 -230 -376.5 -368.5t-499.5 -138.5t-499.5 139t-376.5 368q-20 35 -20 69t20 69q140 229 376.5 368t499.5 139t499.5 -139t376.5 -368q20 -35 20 -69z"/></svg><svg class="ic" style="left:742.02px;top:17.22px" width="17.75" height="17.75" viewBox="0 -1387 1515 1515" preserveAspectRatio="none" fill="#292929"><path transform="scale(1,-1)" d="M363 0l91 91l-235 235l-91 -91v-107h128v-128h107zM886 928q0 22 -22 22q-10 0 -17 -7l-542 -542q-7 -7 -7 -17q0 -22 22 -22q10 0 17 7l542 542q7 7 7 17zM832 1120l416 -416l-832 -832h-416v416zM1515 1024q0 -53 -37 -90l-166 -166l-416 416l166 165q36 38 90 38 q53 0 91 -38l235 -234q37 -39 37 -91z"/></svg><svg class="ic" style="left:779.04px;top:20.04px" width="13.92" height="13.92" viewBox="110 -1170 1188 1188" preserveAspectRatio="none" fill="#ea0512"><path transform="scale(1,-1)" d="M1298 214q0 -40 -28 -68l-136 -136q-28 -28 -68 -28t-68 28l-294 294l-294 -294q-28 -28 -68 -28t-68 28l-136 136q-28 28 -28 68t28 68l294 294l-294 294q-28 28 -28 68t28 68l136 136q28 28 68 28t68 -28l294 -294l294 294q28 28 68 28t68 -28l136 -136q28 -28 28 -68 t-28 -68l-294 -294l294 -294q28 -28 28 -68z"/></svg></div><div class="pager" style="left:311px;top:691px;width:185px"><span class="on" style="width:39px"><b class="x p" style="left:0;right:0;text-align:center;top:9px">1</b></span><span class="" style="width:37px"><b class="x p" style="left:0;right:0;text-align:center;top:9px">2</b></span><span class="" style="width:37px"><b class="x p" style="left:0;right:0;text-align:center;top:9px">3</b></span><span class="" style="width:36px"><b class="x p" style="left:0;right:0;text-align:center;font-size:15.5px;font-weight:700;top:10px">&gt;</b></span><span class="" style="width:34px"><b class="x p" style="left:0;right:0;text-align:center;font-size:15.5px;font-weight:700;top:10px">»</b></span></div></section>
<section class="card tbl" style="left:870px;top:499px;width:1150px;height:760px"><div class="hr" style="top:76.5px"></div><div class="thead" style="top:78.5px;height:58.5px;border-bottom:1px solid #dcdcdc"></div><div class="redbox" style="left:15.25px;top:22px;width:1117.75px;height:34px"></div><span class="x t" style="left:20.01px;top:29px;letter-spacing:-0.682px;">Payment History</span><span class="x h" style="left:48.98px;top:95px;letter-spacing:-0.270px;">Invoice Date</span><span class="x h" style="left:240.23px;top:94px;letter-spacing:-0.463px;">Amount</span><span class="x h" style="left:353.22px;top:94px;letter-spacing:-0.370px;">Status</span><span class="x h" style="left:450.88px;top:95px;letter-spacing:-0.388px;">Date Processed</span><span class="x h" style="left:672.71px;top:94px;letter-spacing:-0.656px;">Processed Through</span><svg class="ic" style="left:153.90px;top:92.25px" width="12.00" height="16.50" viewBox="0 -1344 1024 1408" preserveAspectRatio="none" fill="#10102a"><path transform="scale(1,-1)" d="M1024 448q0 -26 -19 -45l-448 -448q-19 -19 -45 -19t-45 19l-448 448q-19 19 -19 45t19 45t45 19h896q26 0 45 -19t19 -45zM1024 832q0 -26 -19 -45t-45 -19h-896q-26 0 -45 19t-19 45t19 45l448 448q19 19 45 19t45 -19l448 -448q19 -19 19 -45z"/></svg><svg class="ic" style="left:579.10px;top:92.25px" width="12.00" height="16.50" viewBox="0 -1344 1024 1408" preserveAspectRatio="none" fill="#10102a"><path transform="scale(1,-1)" d="M1024 448q0 -26 -19 -45l-448 -448q-19 -19 -45 -19t-45 19l-448 448q-19 19 -19 45t19 45t45 19h896q26 0 45 -19t19 -45zM1024 832q0 -26 -19 -45t-45 -19h-896q-26 0 -45 19t-19 45t19 45l448 448q19 19 45 19t45 -19l448 -448q19 -19 19 -45z"/></svg><span class="x h" style="left:960.63px;top:101px;letter-spacing:-0.832px;">Show Results:</span><span class="select" style="left:1077px;top:90px;width:57px"><span class="x sel" style="left:8.43px;top:9px;letter-spacing:-1.350px;">10</span><svg class="ic" style="left:39.5px;top:12px" width="12" height="8" viewBox="0 0 12 8" fill="none" stroke="#222" stroke-width="1.4" stroke-linecap="round" stroke-linejoin="round"><path d="M1 1.2l5 5 5-5"/></svg></span><div class="row" style="top:137px"><span class="x b" style="left:49.26px;top:19px;letter-spacing:0.657px;">23/04/2025</span><span class="x b" style="left:240.71px;top:19px;letter-spacing:-0.561px;">$10.90</span><span class="x b" style="left:352.64px;top:19px;letter-spacing:-0.089px;color:#6a92cb;">Paid</span><span class="x b" style="left:450.97px;top:19px;letter-spacing:0.693px;">23/04/2025</span><span class="x b" style="left:672.74px;top:19px;letter-spacing:0.234px;">Stripe</span><svg class="ic" style="left:1061.40px;top:19.95px" width="21.00" height="13.50" viewBox="0 -1152 1792 1152" preserveAspectRatio="none" fill="#f5831f"><path transform="scale(1,-1)" d="M1664 576q-152 236 -381 353q61 -104 61 -225q0 -185 -131.5 -316.5t-316.5 -131.5t-316.5 131.5t-131.5 316.5q0 121 61 225q-229 -117 -381 -353q133 -205 333.5 -326.5t434.5 -121.5t434.5 121.5t333.5 326.5zM944 960q0 20 -14 34t-34 14q-125 0 -214.5 -89.5 t-89.5 -214.5q0 -20 14 -34t34 -14t34 14t14 34q0 86 61 147t147 61q20 0 34 14t14 34zM1792 576q0 -34 -20 -69q-140 -230 -376.5 -368.5t-499.5 -138.5t-499.5 139t-376.5 368q-20 35 -20 69t20 69q140 229 376.5 368t499.5 139t499.5 -139t376.5 -368q20 -35 20 -69z"/></svg><svg class="ic" style="left:1100.20px;top:16.80px" width="18.00" height="18.00" viewBox="0 -1408 1536 1536" preserveAspectRatio="none" fill="#a9a9a9"><path transform="scale(1,-1)" d="M1536 640q0 -156 -61 -298t-164 -245t-245 -164t-298 -61q-172 0 -327 72.5t-264 204.5q-7 10 -6.5 22.5t8.5 20.5l137 138q10 9 25 9q16 -2 23 -12q73 -95 179 -147t225 -52q104 0 198.5 40.5t163.5 109.5t109.5 163.5t40.5 198.5t-40.5 198.5t-109.5 163.5 t-163.5 109.5t-198.5 40.5q-98 0 -188 -35.5t-160 -101.5l137 -138q31 -30 14 -69q-17 -40 -59 -40h-448q-26 0 -45 19t-19 45v448q0 42 40 59q39 17 69 -14l130 -129q107 101 244.5 156.5t284.5 55.5q156 0 298 -61t245 -164t164 -245t61 -298z"/></svg><span class="x" style="left:1124.3px;top:16px;font-family:'Liberation Serif',serif;font-size:21px;color:#b9b9b9">$</span></div><div class="row alt" style="top:190px"><span class="x b" style="left:48.66px;top:19px;letter-spacing:0.409px;">16/04/2025</span><span class="x b" style="left:240.71px;top:19px;letter-spacing:-0.515px;">$5.45</span><span class="x b" style="left:352.64px;top:19px;letter-spacing:-0.089px;color:#6a92cb;">Paid</span><span class="x b" style="left:450.77px;top:19px;letter-spacing:0.405px;">16/04/2025</span><span class="x b" style="left:672.74px;top:19px;letter-spacing:0.234px;">Stripe</span><svg class="ic" style="left:1061.40px;top:19.95px" width="21.00" height="13.50" viewBox="0 -1152 1792 1152" preserveAspectRatio="none" fill="#f5831f"><path transform="scale(1,-1)" d="M1664 576q-152 236 -381 353q61 -104 61 -225q0 -185 -131.5 -316.5t-316.5 -131.5t-316.5 131.5t-131.5 316.5q0 121 61 225q-229 -117 -381 -353q133 -205 333.5 -326.5t434.5 -121.5t434.5 121.5t333.5 326.5zM944 960q0 20 -14 34t-34 14q-125 0 -214.5 -89.5 t-89.5 -214.5q0 -20 14 -34t34 -14t34 14t14 34q0 86 61 147t147 61q20 0 34 14t14 34zM1792 576q0 -34 -20 -69q-140 -230 -376.5 -368.5t-499.5 -138.5t-499.5 139t-376.5 368q-20 35 -20 69t20 69q140 229 376.5 368t499.5 139t499.5 -139t376.5 -368q20 -35 20 -69z"/></svg><svg class="ic" style="left:1100.20px;top:16.80px" width="18.00" height="18.00" viewBox="0 -1408 1536 1536" preserveAspectRatio="none" fill="#a9a9a9"><path transform="scale(1,-1)" d="M1536 640q0 -156 -61 -298t-164 -245t-245 -164t-298 -61q-172 0 -327 72.5t-264 204.5q-7 10 -6.5 22.5t8.5 20.5l137 138q10 9 25 9q16 -2 23 -12q73 -95 179 -147t225 -52q104 0 198.5 40.5t163.5 109.5t109.5 163.5t40.5 198.5t-40.5 198.5t-109.5 163.5 t-163.5 109.5t-198.5 40.5q-98 0 -188 -35.5t-160 -101.5l137 -138q31 -30 14 -69q-17 -40 -59 -40h-448q-26 0 -45 19t-19 45v448q0 42 40 59q39 17 69 -14l130 -129q107 101 244.5 156.5t284.5 55.5q156 0 298 -61t245 -164t164 -245t61 -298z"/></svg><span class="x" style="left:1124.3px;top:16px;font-family:'Liberation Serif',serif;font-size:21px;color:#b9b9b9">$</span></div><div class="row" style="top:243px"><span class="x b" style="left:49.28px;top:19px;letter-spacing:0.887px;">09/04/2025</span><span class="x b" style="left:240.71px;top:19px;letter-spacing:-0.561px;">$10.90</span><span class="x b" style="left:352.64px;top:19px;letter-spacing:-0.089px;color:#6a92cb;">Paid</span><span class="x b" style="left:451.31px;top:19px;letter-spacing:0.890px;">09/04/2025</span><span class="x b" style="left:672.74px;top:19px;letter-spacing:0.234px;">Stripe</span><svg class="ic" style="left:1061.40px;top:19.95px" width="21.00" height="13.50" viewBox="0 -1152 1792 1152" preserveAspectRatio="none" fill="#f5831f"><path transform="scale(1,-1)" d="M1664 576q-152 236 -381 353q61 -104 61 -225q0 -185 -131.5 -316.5t-316.5 -131.5t-316.5 131.5t-131.5 316.5q0 121 61 225q-229 -117 -381 -353q133 -205 333.5 -326.5t434.5 -121.5t434.5 121.5t333.5 326.5zM944 960q0 20 -14 34t-34 14q-125 0 -214.5 -89.5 t-89.5 -214.5q0 -20 14 -34t34 -14t34 14t14 34q0 86 61 147t147 61q20 0 34 14t14 34zM1792 576q0 -34 -20 -69q-140 -230 -376.5 -368.5t-499.5 -138.5t-499.5 139t-376.5 368q-20 35 -20 69t20 69q140 229 376.5 368t499.5 139t499.5 -139t376.5 -368q20 -35 20 -69z"/></svg><svg class="ic" style="left:1100.20px;top:16.80px" width="18.00" height="18.00" viewBox="0 -1408 1536 1536" preserveAspectRatio="none" fill="#a9a9a9"><path transform="scale(1,-1)" d="M1536 640q0 -156 -61 -298t-164 -245t-245 -164t-298 -61q-172 0 -327 72.5t-264 204.5q-7 10 -6.5 22.5t8.5 20.5l137 138q10 9 25 9q16 -2 23 -12q73 -95 179 -147t225 -52q104 0 198.5 40.5t163.5 109.5t109.5 163.5t40.5 198.5t-40.5 198.5t-109.5 163.5 t-163.5 109.5t-198.5 40.5q-98 0 -188 -35.5t-160 -101.5l137 -138q31 -30 14 -69q-17 -40 -59 -40h-448q-26 0 -45 19t-19 45v448q0 42 40 59q39 17 69 -14l130 -129q107 101 244.5 156.5t284.5 55.5q156 0 298 -61t245 -164t164 -245t61 -298z"/></svg><span class="x" style="left:1124.3px;top:16px;font-family:'Liberation Serif',serif;font-size:21px;color:#b9b9b9">$</span></div><div class="row alt" style="top:296px"><span class="x b" style="left:49.28px;top:18px;letter-spacing:0.819px;">02/04/2025</span><span class="x b" style="left:240.71px;top:18px;letter-spacing:-0.515px;">$5.45</span><span class="x b" style="left:352.64px;top:18px;letter-spacing:-0.089px;color:#6a92cb;">Paid</span><span class="x b" style="left:451.31px;top:18px;letter-spacing:0.893px;">02/04/2025</span><span class="x b" style="left:672.74px;top:18px;letter-spacing:0.234px;">Stripe</span><svg class="ic" style="left:1061.40px;top:19.95px" width="21.00" height="13.50" viewBox="0 -1152 1792 1152" preserveAspectRatio="none" fill="#f5831f"><path transform="scale(1,-1)" d="M1664 576q-152 236 -381 353q61 -104 61 -225q0 -185 -131.5 -316.5t-316.5 -131.5t-316.5 131.5t-131.5 316.5q0 121 61 225q-229 -117 -381 -353q133 -205 333.5 -326.5t434.5 -121.5t434.5 121.5t333.5 326.5zM944 960q0 20 -14 34t-34 14q-125 0 -214.5 -89.5 t-89.5 -214.5q0 -20 14 -34t34 -14t34 14t14 34q0 86 61 147t147 61q20 0 34 14t14 34zM1792 576q0 -34 -20 -69q-140 -230 -376.5 -368.5t-499.5 -138.5t-499.5 139t-376.5 368q-20 35 -20 69t20 69q140 229 376.5 368t499.5 139t499.5 -139t376.5 -368q20 -35 20 -69z"/></svg><svg class="ic" style="left:1100.20px;top:16.80px" width="18.00" height="18.00" viewBox="0 -1408 1536 1536" preserveAspectRatio="none" fill="#a9a9a9"><path transform="scale(1,-1)" d="M1536 640q0 -156 -61 -298t-164 -245t-245 -164t-298 -61q-172 0 -327 72.5t-264 204.5q-7 10 -6.5 22.5t8.5 20.5l137 138q10 9 25 9q16 -2 23 -12q73 -95 179 -147t225 -52q104 0 198.5 40.5t163.5 109.5t109.5 163.5t40.5 198.5t-40.5 198.5t-109.5 163.5 t-163.5 109.5t-198.5 40.5q-98 0 -188 -35.5t-160 -101.5l137 -138q31 -30 14 -69q-17 -40 -59 -40h-448q-26 0 -45 19t-19 45v448q0 42 40 59q39 17 69 -14l130 -129q107 101 244.5 156.5t284.5 55.5q156 0 298 -61t245 -164t164 -245t61 -298z"/></svg><span class="x" style="left:1124.3px;top:16px;font-family:'Liberation Serif',serif;font-size:21px;color:#b9b9b9">$</span></div><div class="row" style="top:349px"><span class="x b" style="left:49.26px;top:18px;letter-spacing:0.598px;">26/03/2025</span><span class="x b" style="left:240.71px;top:18px;letter-spacing:-0.515px;">$5.45</span><span class="x b" style="left:352.64px;top:18px;letter-spacing:-0.089px;color:#6a92cb;">Paid</span><span class="x b" style="left:450.97px;top:18px;letter-spacing:0.620px;">26/03/2025</span><span class="x b" style="left:672.74px;top:18px;letter-spacing:0.234px;">Stripe</span><svg class="ic" style="left:1061.40px;top:19.95px" width="21.00" height="13.50" viewBox="0 -1152 1792 1152" preserveAspectRatio="none" fill="#f5831f"><path transform="scale(1,-1)" d="M1664 576q-152 236 -381 353q61 -104 61 -225q0 -185 -131.5 -316.5t-316.5 -131.5t-316.5 131.5t-131.5 316.5q0 121 61 225q-229 -117 -381 -353q133 -205 333.5 -326.5t434.5 -121.5t434.5 121.5t333.5 326.5zM944 960q0 20 -14 34t-34 14q-125 0 -214.5 -89.5 t-89.5 -214.5q0 -20 14 -34t34 -14t34 14t14 34q0 86 61 147t147 61q20 0 34 14t14 34zM1792 576q0 -34 -20 -69q-140 -230 -376.5 -368.5t-499.5 -138.5t-499.5 139t-376.5 368q-20 35 -20 69t20 69q140 229 376.5 368t499.5 139t499.5 -139t376.5 -368q20 -35 20 -69z"/></svg><svg class="ic" style="left:1100.20px;top:16.80px" width="18.00" height="18.00" viewBox="0 -1408 1536 1536" preserveAspectRatio="none" fill="#a9a9a9"><path transform="scale(1,-1)" d="M1536 640q0 -156 -61 -298t-164 -245t-245 -164t-298 -61q-172 0 -327 72.5t-264 204.5q-7 10 -6.5 22.5t8.5 20.5l137 138q10 9 25 9q16 -2 23 -12q73 -95 179 -147t225 -52q104 0 198.5 40.5t163.5 109.5t109.5 163.5t40.5 198.5t-40.5 198.5t-109.5 163.5 t-163.5 109.5t-198.5 40.5q-98 0 -188 -35.5t-160 -101.5l137 -138q31 -30 14 -69q-17 -40 -59 -40h-448q-26 0 -45 19t-19 45v448q0 42 40 59q39 17 69 -14l130 -129q107 101 244.5 156.5t284.5 55.5q156 0 298 -61t245 -164t164 -245t61 -298z"/></svg><span class="x" style="left:1124.3px;top:16px;font-family:'Liberation Serif',serif;font-size:21px;color:#b9b9b9">$</span></div><div class="row alt" style="top:402px"><span class="x b" style="left:48.66px;top:18px;letter-spacing:0.307px;">19/03/2025</span><span class="x b" style="left:240.71px;top:18px;letter-spacing:-0.515px;">$5.45</span><span class="x b" style="left:352.64px;top:18px;letter-spacing:-0.089px;color:#6a92cb;">Paid</span><span class="x b" style="left:450.77px;top:18px;letter-spacing:0.303px;">19/03/2025</span><span class="x b" style="left:672.74px;top:18px;letter-spacing:0.234px;">Stripe</span><svg class="ic" style="left:1061.40px;top:19.95px" width="21.00" height="13.50" viewBox="0 -1152 1792 1152" preserveAspectRatio="none" fill="#f5831f"><path transform="scale(1,-1)" d="M1664 576q-152 236 -381 353q61 -104 61 -225q0 -185 -131.5 -316.5t-316.5 -131.5t-316.5 131.5t-131.5 316.5q0 121 61 225q-229 -117 -381 -353q133 -205 333.5 -326.5t434.5 -121.5t434.5 121.5t333.5 326.5zM944 960q0 20 -14 34t-34 14q-125 0 -214.5 -89.5 t-89.5 -214.5q0 -20 14 -34t34 -14t34 14t14 34q0 86 61 147t147 61q20 0 34 14t14 34zM1792 576q0 -34 -20 -69q-140 -230 -376.5 -368.5t-499.5 -138.5t-499.5 139t-376.5 368q-20 35 -20 69t20 69q140 229 376.5 368t499.5 139t499.5 -139t376.5 -368q20 -35 20 -69z"/></svg><svg class="ic" style="left:1100.20px;top:16.80px" width="18.00" height="18.00" viewBox="0 -1408 1536 1536" preserveAspectRatio="none" fill="#a9a9a9"><path transform="scale(1,-1)" d="M1536 640q0 -156 -61 -298t-164 -245t-245 -164t-298 -61q-172 0 -327 72.5t-264 204.5q-7 10 -6.5 22.5t8.5 20.5l137 138q10 9 25 9q16 -2 23 -12q73 -95 179 -147t225 -52q104 0 198.5 40.5t163.5 109.5t109.5 163.5t40.5 198.5t-40.5 198.5t-109.5 163.5 t-163.5 109.5t-198.5 40.5q-98 0 -188 -35.5t-160 -101.5l137 -138q31 -30 14 -69q-17 -40 -59 -40h-448q-26 0 -45 19t-19 45v448q0 42 40 59q39 17 69 -14l130 -129q107 101 244.5 156.5t284.5 55.5q156 0 298 -61t245 -164t164 -245t61 -298z"/></svg><span class="x" style="left:1124.3px;top:16px;font-family:'Liberation Serif',serif;font-size:21px;color:#b9b9b9">$</span></div><div class="row" style="top:455px"><span class="x b" style="left:48.66px;top:18px;letter-spacing:0.239px;">12/03/2025</span><span class="x b" style="left:240.71px;top:18px;letter-spacing:-0.561px;">$10.90</span><span class="x b" style="left:352.64px;top:18px;letter-spacing:-0.089px;color:#6a92cb;">Paid</span><span class="x b" style="left:450.77px;top:18px;letter-spacing:0.299px;">12/03/2025</span><span class="x b" style="left:672.74px;top:18px;letter-spacing:0.234px;">Stripe</span><svg class="ic" style="left:1061.40px;top:19.95px" width="21.00" height="13.50" viewBox="0 -1152 1792 1152" preserveAspectRatio="none" fill="#f5831f"><path transform="scale(1,-1)" d="M1664 576q-152 236 -381 353q61 -104 61 -225q0 -185 -131.5 -316.5t-316.5 -131.5t-316.5 131.5t-131.5 316.5q0 121 61 225q-229 -117 -381 -353q133 -205 333.5 -326.5t434.5 -121.5t434.5 121.5t333.5 326.5zM944 960q0 20 -14 34t-34 14q-125 0 -214.5 -89.5 t-89.5 -214.5q0 -20 14 -34t34 -14t34 14t14 34q0 86 61 147t147 61q20 0 34 14t14 34zM1792 576q0 -34 -20 -69q-140 -230 -376.5 -368.5t-499.5 -138.5t-499.5 139t-376.5 368q-20 35 -20 69t20 69q140 229 376.5 368t499.5 139t499.5 -139t376.5 -368q20 -35 20 -69z"/></svg><svg class="ic" style="left:1100.20px;top:16.80px" width="18.00" height="18.00" viewBox="0 -1408 1536 1536" preserveAspectRatio="none" fill="#a9a9a9"><path transform="scale(1,-1)" d="M1536 640q0 -156 -61 -298t-164 -245t-245 -164t-298 -61q-172 0 -327 72.5t-264 204.5q-7 10 -6.5 22.5t8.5 20.5l137 138q10 9 25 9q16 -2 23 -12q73 -95 179 -147t225 -52q104 0 198.5 40.5t163.5 109.5t109.5 163.5t40.5 198.5t-40.5 198.5t-109.5 163.5 t-163.5 109.5t-198.5 40.5q-98 0 -188 -35.5t-160 -101.5l137 -138q31 -30 14 -69q-17 -40 -59 -40h-448q-26 0 -45 19t-19 45v448q0 42 40 59q39 17 69 -14l130 -129q107 101 244.5 156.5t284.5 55.5q156 0 298 -61t245 -164t164 -245t61 -298z"/></svg><span class="x" style="left:1124.3px;top:16px;font-family:'Liberation Serif',serif;font-size:21px;color:#b9b9b9">$</span></div><div class="row alt" style="top:508px"><span class="x b" style="left:49.28px;top:18px;letter-spacing:0.717px;">05/03/2025</span><span class="x b" style="left:240.71px;top:18px;letter-spacing:-0.561px;">$10.90</span><span class="x b" style="left:352.64px;top:18px;letter-spacing:-0.089px;color:#6a92cb;">Paid</span><span class="x b" style="left:451.31px;top:18px;letter-spacing:0.791px;">05/03/2025</span><span class="x b" style="left:672.74px;top:18px;letter-spacing:0.234px;">Stripe</span><svg class="ic" style="left:1061.40px;top:19.95px" width="21.00" height="13.50" viewBox="0 -1152 1792 1152" preserveAspectRatio="none" fill="#f5831f"><path transform="scale(1,-1)" d="M1664 576q-152 236 -381 353q61 -104 61 -225q0 -185 -131.5 -316.5t-316.5 -131.5t-316.5 131.5t-131.5 316.5q0 121 61 225q-229 -117 -381 -353q133 -205 333.5 -326.5t434.5 -121.5t434.5 121.5t333.5 326.5zM944 960q0 20 -14 34t-34 14q-125 0 -214.5 -89.5 t-89.5 -214.5q0 -20 14 -34t34 -14t34 14t14 34q0 86 61 147t147 61q20 0 34 14t14 34zM1792 576q0 -34 -20 -69q-140 -230 -376.5 -368.5t-499.5 -138.5t-499.5 139t-376.5 368q-20 35 -20 69t20 69q140 229 376.5 368t499.5 139t499.5 -139t376.5 -368q20 -35 20 -69z"/></svg><svg class="ic" style="left:1100.20px;top:16.80px" width="18.00" height="18.00" viewBox="0 -1408 1536 1536" preserveAspectRatio="none" fill="#a9a9a9"><path transform="scale(1,-1)" d="M1536 640q0 -156 -61 -298t-164 -245t-245 -164t-298 -61q-172 0 -327 72.5t-264 204.5q-7 10 -6.5 22.5t8.5 20.5l137 138q10 9 25 9q16 -2 23 -12q73 -95 179 -147t225 -52q104 0 198.5 40.5t163.5 109.5t109.5 163.5t40.5 198.5t-40.5 198.5t-109.5 163.5 t-163.5 109.5t-198.5 40.5q-98 0 -188 -35.5t-160 -101.5l137 -138q31 -30 14 -69q-17 -40 -59 -40h-448q-26 0 -45 19t-19 45v448q0 42 40 59q39 17 69 -14l130 -129q107 101 244.5 156.5t284.5 55.5q156 0 298 -61t245 -164t164 -245t61 -298z"/></svg><span class="x" style="left:1124.3px;top:16px;font-family:'Liberation Serif',serif;font-size:21px;color:#b9b9b9">$</span></div><div class="row" style="top:561px"><span class="x b" style="left:49.26px;top:18px;letter-spacing:0.598px;">26/02/2025</span><span class="x b" style="left:240.71px;top:18px;letter-spacing:-0.561px;">$10.90</span><span class="x b" style="left:352.64px;top:18px;letter-spacing:-0.089px;color:#6a92cb;">Paid</span><span class="x b" style="left:450.97px;top:18px;letter-spacing:0.620px;">26/02/2025</span><span class="x b" style="left:672.74px;top:18px;letter-spacing:0.234px;">Stripe</span><svg class="ic" style="left:1061.40px;top:19.95px" width="21.00" height="13.50" viewBox="0 -1152 1792 1152" preserveAspectRatio="none" fill="#f5831f"><path transform="scale(1,-1)" d="M1664 576q-152 236 -381 353q61 -104 61 -225q0 -185 -131.5 -316.5t-316.5 -131.5t-316.5 131.5t-131.5 316.5q0 121 61 225q-229 -117 -381 -353q133 -205 333.5 -326.5t434.5 -121.5t434.5 121.5t333.5 326.5zM944 960q0 20 -14 34t-34 14q-125 0 -214.5 -89.5 t-89.5 -214.5q0 -20 14 -34t34 -14t34 14t14 34q0 86 61 147t147 61q20 0 34 14t14 34zM1792 576q0 -34 -20 -69q-140 -230 -376.5 -368.5t-499.5 -138.5t-499.5 139t-376.5 368q-20 35 -20 69t20 69q140 229 376.5 368t499.5 139t499.5 -139t376.5 -368q20 -35 20 -69z"/></svg><svg class="ic" style="left:1100.20px;top:16.80px" width="18.00" height="18.00" viewBox="0 -1408 1536 1536" preserveAspectRatio="none" fill="#a9a9a9"><path transform="scale(1,-1)" d="M1536 640q0 -156 -61 -298t-164 -245t-245 -164t-298 -61q-172 0 -327 72.5t-264 204.5q-7 10 -6.5 22.5t8.5 20.5l137 138q10 9 25 9q16 -2 23 -12q73 -95 179 -147t225 -52q104 0 198.5 40.5t163.5 109.5t109.5 163.5t40.5 198.5t-40.5 198.5t-109.5 163.5 t-163.5 109.5t-198.5 40.5q-98 0 -188 -35.5t-160 -101.5l137 -138q31 -30 14 -69q-17 -40 -59 -40h-448q-26 0 -45 19t-19 45v448q0 42 40 59q39 17 69 -14l130 -129q107 101 244.5 156.5t284.5 55.5q156 0 298 -61t245 -164t164 -245t61 -298z"/></svg><span class="x" style="left:1124.3px;top:16px;font-family:'Liberation Serif',serif;font-size:21px;color:#b9b9b9">$</span></div><div class="row alt last" style="top:614px"><span class="x b" style="left:48.66px;top:18px;letter-spacing:0.325px;">19/02/2025</span><span class="x b" style="left:240.62px;top:18px;letter-spacing:-0.475px;">$10.90</span><span class="x b" style="left:352.69px;top:18px;letter-spacing:-0.061px;color:#6a92cb;">Paid</span><span class="x b" style="left:450.69px;top:18px;letter-spacing:0.347px;">19/02/2025</span><span class="x b" style="left:672.75px;top:18px;letter-spacing:0.194px;">Stripe</span><svg class="ic" style="left:1061.40px;top:19.95px" width="21.00" height="13.50" viewBox="0 -1152 1792 1152" preserveAspectRatio="none" fill="#f5831f"><path transform="scale(1,-1)" d="M1664 576q-152 236 -381 353q61 -104 61 -225q0 -185 -131.5 -316.5t-316.5 -131.5t-316.5 131.5t-131.5 316.5q0 121 61 225q-229 -117 -381 -353q133 -205 333.5 -326.5t434.5 -121.5t434.5 121.5t333.5 326.5zM944 960q0 20 -14 34t-34 14q-125 0 -214.5 -89.5 t-89.5 -214.5q0 -20 14 -34t34 -14t34 14t14 34q0 86 61 147t147 61q20 0 34 14t14 34zM1792 576q0 -34 -20 -69q-140 -230 -376.5 -368.5t-499.5 -138.5t-499.5 139t-376.5 368q-20 35 -20 69t20 69q140 229 376.5 368t499.5 139t499.5 -139t376.5 -368q20 -35 20 -69z"/></svg><svg class="ic" style="left:1100.20px;top:16.80px" width="18.00" height="18.00" viewBox="0 -1408 1536 1536" preserveAspectRatio="none" fill="#a9a9a9"><path transform="scale(1,-1)" d="M1536 640q0 -156 -61 -298t-164 -245t-245 -164t-298 -61q-172 0 -327 72.5t-264 204.5q-7 10 -6.5 22.5t8.5 20.5l137 138q10 9 25 9q16 -2 23 -12q73 -95 179 -147t225 -52q104 0 198.5 40.5t163.5 109.5t109.5 163.5t40.5 198.5t-40.5 198.5t-109.5 163.5 t-163.5 109.5t-198.5 40.5q-98 0 -188 -35.5t-160 -101.5l137 -138q31 -30 14 -69q-17 -40 -59 -40h-448q-26 0 -45 19t-19 45v448q0 42 40 59q39 17 69 -14l130 -129q107 101 244.5 156.5t284.5 55.5q156 0 298 -61t245 -164t164 -245t61 -298z"/></svg><span class="x" style="left:1124.3px;top:16px;font-family:'Liberation Serif',serif;font-size:21px;color:#b9b9b9">$</span></div><div class="pager" style="left:500px;top:691px;width:148px"><span class="on" style="width:38px"><b class="x p" style="left:0;right:0;text-align:center;top:9px">1</b></span><span class="" style="width:37px"><b class="x p" style="left:0;right:0;text-align:center;top:9px">2</b></span><span class="" style="width:37px"><b class="x p" style="left:0;right:0;text-align:center;font-size:15.5px;font-weight:700;top:10px">&gt;</b></span><span class="" style="width:34px"><b class="x p" style="left:0;right:0;text-align:center;font-size:15.5px;font-weight:700;top:10px">»</b></span></div></section>
<div class="fab" style="left:1657px;top:1096.5px;width:85px;height:65px"><svg class="ic" style="left:25px;top:19px" width="36" height="29" viewBox="0 0 36 29" fill="none" stroke="#e4513a" stroke-width="2"><path d="M6.4 .9H.9v5.4M29.6 .9h5.5v5.4M6.4 28.1H.9v-5.4M29.6 28.1h5.5v-5.4" stroke-linejoin="round"/><path d="M6 4.7v18.5M20.1 4.7v18.5M29.6 4.7v18.5M10.7 8.6v14.6M15.4 8.6v14.6M24.9 8.6v14.6M10.7 4.7v1.6M15.4 4.7v1.6M24.9 4.7v1.6"/></svg></div>
<div class="thumb" style="left:2040px;top:210px;width:8px;height:1002px"></div>
</body>
</html>
